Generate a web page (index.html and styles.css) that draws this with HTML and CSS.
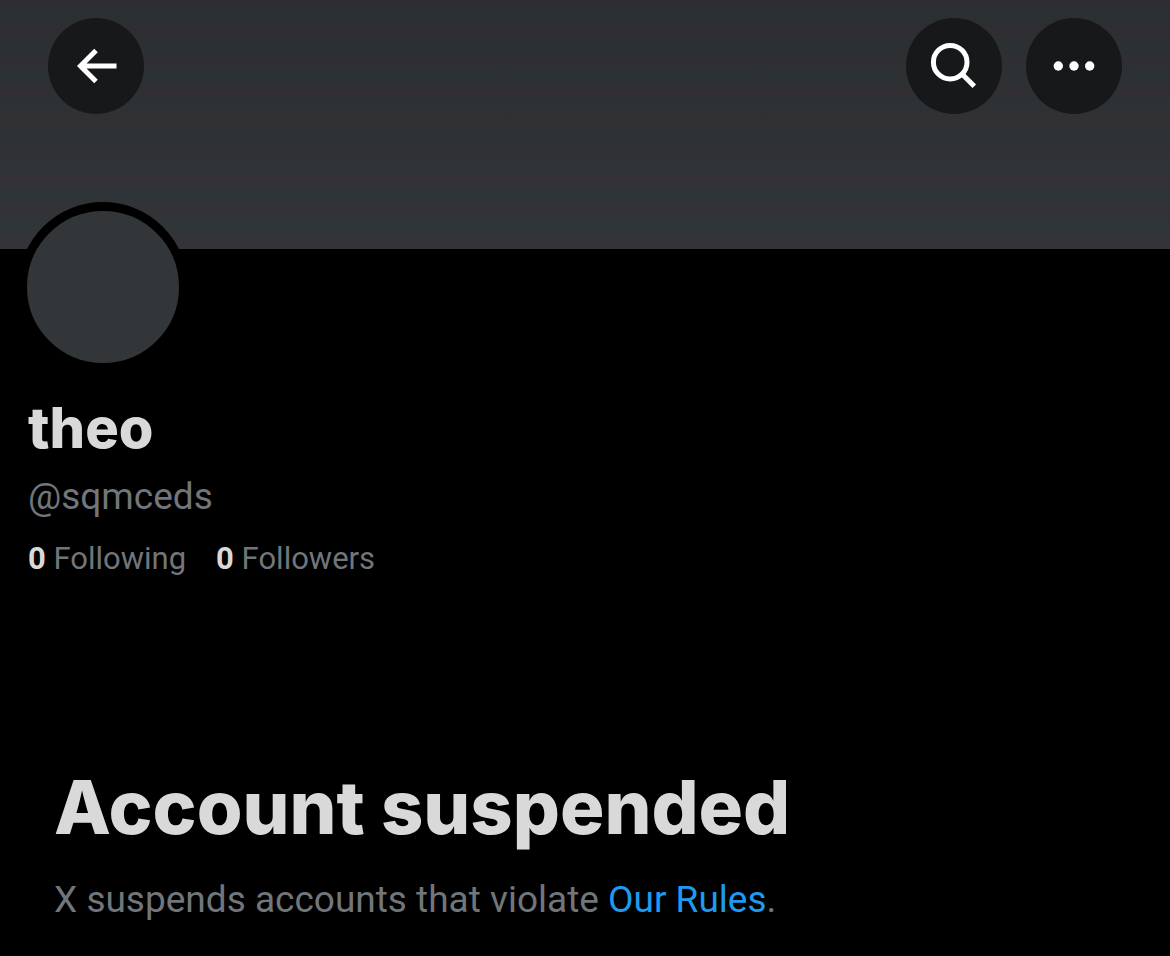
FILE: index.html
```html
<!DOCTYPE html>
<html lang="en">
<head>
    <meta charset="UTF-8">
    <meta name="viewport" content="width=device-width, initial-scale=1.0">
    <title>theo (@sqmceds)</title>
    <link rel="stylesheet" href="styles.css">
</head>
<body>
    <header class="banner">
        <button class="icon-button" type="button" aria-label="Back">
            <svg viewBox="0 0 96 96" fill="none" stroke="#fff" stroke-width="5">
                <path d="M68.500 48H32M48 32.500L32.500 48L48 63.500"/>
            </svg>
        </button>
        <div class="banner-actions">
            <button class="icon-button" type="button" aria-label="Search">
                <svg viewBox="0 0 96 96" fill="none" stroke="#fff" stroke-width="5">
                    <circle cx="44.200" cy="44.200" r="16.800"/>
                    <path d="M56 56L68.300 68.300"/>
                </svg>
            </button>
            <button class="icon-button" type="button" aria-label="More">
                <svg viewBox="0 0 96 96" fill="#fff">
                    <circle cx="32.300" cy="48" r="4.700"/>
                    <circle cx="48" cy="48" r="4.700"/>
                    <circle cx="63.700" cy="48" r="4.700"/>
                </svg>
            </button>
        </div>
    </header>

    <main>
        <section class="profile">
            <div class="avatar"></div>
            <h1 class="name">theo</h1>
            <p class="handle">@sqmceds</p>
            <div class="stats">
                <a href="#following"><strong>0</strong> Following</a>
                <a href="#followers"><strong>0</strong> Followers</a>
            </div>
        </section>

        <section class="notice">
            <h2>Account suspended</h2>
            <p>X suspends accounts that violate <a href="#rules">Our Rules</a>.</p>
        </section>
    </main>
</body>
</html>
```
FILE: styles.css
```css
* {
    box-sizing: border-box;
}
body {
    margin: 0;
    background-color: #000;
    color: #d9d9d9;
    font-family: Roboto, "Liberation Sans", sans-serif;
}
h1, h2, p {
    margin: 0;
}
h1, h2 {
    font-family: Inter, "Liberation Sans", sans-serif;
    font-weight: 800;
}
a {
    color: inherit;
    text-decoration: none;
}

/* Banner */
.banner {
    display: flex;
    justify-content: space-between;
    align-items: flex-start;
    height: 249px;
    padding: 18px 48px;
    background:
        repeating-linear-gradient(rgba(56, 44, 50, 0.3) 0, rgba(38, 54, 56, 0.3) 15px, rgba(56, 44, 50, 0.3) 30px),
        linear-gradient(#2b2d30, #333639);
}
.banner-actions {
    display: flex;
    gap: 24px;
}
.icon-button {
    width: 96px;
    height: 96px;
    padding: 0;
    border: none;
    border-radius: 50%;
    background-color: #17181a;
    cursor: pointer;
}
.icon-button svg {
    display: block;
    width: 100%;
}

/* Profile */
.profile {
    padding: 0 28px;
}
.avatar {
    width: 170px;
    height: 170px;
    margin: -47px 0 0 -10px;
    border: 9px solid #000;
    border-radius: 50%;
    background-color: #323639;
}
.name {
    margin-top: 20px;
    font-size: 56px;
    line-height: 72px;
}
.handle {
    margin-top: 9px;
    color: #71767b;
    font-size: 37px;
    line-height: 48px;
}
.stats {
    display: flex;
    gap: 30px;
    margin-top: 18px;
    color: #71767b;
    font-size: 31px;
    line-height: 40px;
}
.stats strong {
    color: #d9d9d9;
}

/* Suspension notice */
.notice {
    padding: 180px 54px 32px;
}
.notice h2 {
    font-size: 74px;
    line-height: 96px;
}
.notice p {
    margin-top: 21px;
    color: #71767b;
    font-size: 37px;
    line-height: 48px;
}
.notice a {
    color: #1d9bf0;
}
```
